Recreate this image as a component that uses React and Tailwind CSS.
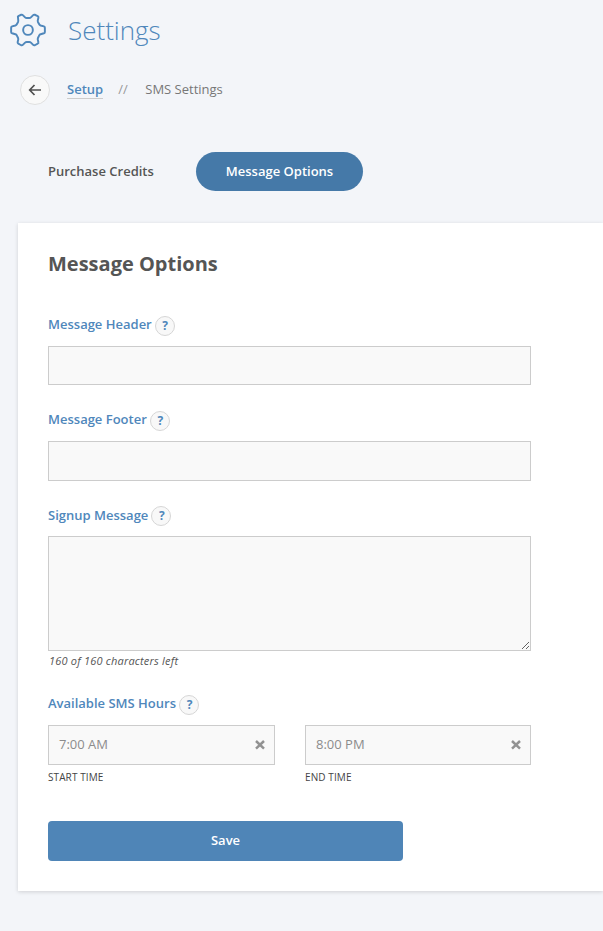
import { useState } from 'react';

function GearIcon() {
  return (
    <svg width="38" height="36" viewBox="25.5 34.5 117 111" fill="none" stroke="#4f87bb" strokeWidth="6" strokeLinejoin="round">
      <path d="M53 50 Q52 48 54 47 L63 43 Q66 42 68 44 L75 51 Q77 53 80 53 L88 53 Q91 53 93 51 L100 44 Q102 42 105 43 L114 47 Q117 49 116 52 L114 61 Q114 64 115 66 L119 73 Q120 75 123 76 L133 79 Q136 80 136 83 L136 96 Q136 99 133 100 L123 103 Q120 104 119 106 L115 114 Q114 116 114 119 L116 128 Q117 131 114 132 L105 137 Q102 138 100 136 L93 129 Q91 127 88 127 L80 127 Q77 127 75 129 L68 136 Q66 138 63 137 L54 132 Q52 131 52 128 L54 119 Q54 116 53 114 L49 106 Q48 104 45 103 L35 100 Q32 99 32 96 L32 83 Q32 80 35 79 L45 76 Q48 75 49 73 L53 66 Q54 64 54 61 Z" />
      <circle cx="84" cy="90" r="15" />
    </svg>
  );
}

function FieldLabel({ children, className = 'leading-4' }) {
  return (
    <div className="flex h-5 items-start gap-[3px] text-[13px] font-semibold text-[#4f87bb]">
      <span className={className}>{children}</span>
      <span className="flex h-5 w-5 items-center justify-center rounded-full border-[1.5px] border-[#d6d6d6] bg-[#f8f8f8] pl-px text-xs font-bold">?</span>
    </div>
  );
}

function TimeField({ value, caption, onClear, className }) {
  return (
    <div className={className}>
      <div className="flex h-10 items-center justify-between border border-[#ccc] bg-[#f9f9f9] pl-2.5 pr-2 text-[13px] text-[#8c8c8c]">
        <span>{value}</span>
        <button onClick={onClear} aria-label="Clear">
          <svg width="12" height="12" viewBox="0 0 12 12" stroke="#929292" strokeWidth="2.5">
            <path d="M2 2 L10 9.6 M10 2 L2 9.6" />
          </svg>
        </button>
      </div>
      <p className="mt-[5px] text-[10px] leading-[15px] tracking-[0.1px] text-[#444]">{caption}</p>
    </div>
  );
}

export default function App() {
  const [start, setStart] = useState('7:00 AM');
  const [end, setEnd] = useState('8:00 PM');
  const [message, setMessage] = useState('');

  return (
    <div className="h-[931px] w-full overflow-hidden bg-[#f3f5f9] font-['Open_Sans',sans-serif] text-[13px] text-[#555]">
      <header className="flex h-[60px] items-center pl-[9px]">
        <GearIcon />
        <h1 className="ml-[21px] text-[26px] font-light leading-none text-[#4f87bb]">Settings</h1>
      </header>

      <nav className="mt-[15px] flex h-[30px] items-center pl-5">
        <button aria-label="Back" className="flex h-[30px] w-[30px] items-center justify-center rounded-full border border-[#e0e0e0] bg-[#f9f9f9]">
          <svg width="14" height="12" viewBox="0 0 14 12" fill="none" stroke="#505050" strokeWidth="1.7">
            <path d="M13 6 H2 M6.5 1 L1.7 6 L6.5 11" />
          </svg>
        </button>
        <a href="#" className="ml-[17px] border-b border-[#ccc] font-semibold leading-[17px] text-[#4f87bb]">Setup</a>
        <span className="ml-[15px] text-[#999]">//</span>
        <span className="ml-[17.6px] text-[#777]">SMS Settings</span>
      </nav>

      <div className="mt-[47px] flex h-[39px] items-center pl-12">
        <a href="#" className="w-[148px] font-semibold">Purchase Credits</a>
        <a href="#" className="flex h-[39px] w-[167px] items-center justify-center rounded-full bg-[#4579a8] font-semibold text-white">Message Options</a>
      </div>

      <section className="ml-[18px] mt-8 h-[668px] bg-white pl-[30px] pt-[27px] shadow-[0_1px_4px_rgba(0,0,0,0.15)]">
        <h2 className="text-xl font-bold leading-7 text-[#555]">Message Options</h2>

        <div className="mt-[38px]">
          <FieldLabel>Message Header</FieldLabel>
          <input className="mt-[10px] block h-[39px] w-[483px] border border-[#ccc] bg-[#f9f9f9] px-2.5" />
        </div>

        <div className="mt-[26px]">
          <FieldLabel>Message Footer</FieldLabel>
          <input className="mt-[10px] block h-10 w-[483px] border border-[#ccc] bg-[#f9f9f9] px-2.5" />
        </div>

        <div className="mt-[25px]">
          <FieldLabel className="leading-[18px]">Signup Message</FieldLabel>
          <textarea
            value={message}
            maxLength={160}
            onChange={(e) => setMessage(e.target.value)}
            className="mt-[10px] block h-[115px] w-[483px] border border-[#ccc] bg-[#f9f9f9] p-2.5"
          />
          <p className="mt-[2px] pl-px text-[11px] italic leading-4 tracking-[0.2px]">{160 - message.length} of 160 characters left</p>
        </div>

        <div className="mt-[26px]">
          <FieldLabel>Available SMS Hours</FieldLabel>
          <div className="mt-[10px] flex gap-[30px]">
            <TimeField className="w-[227px]" value={start} caption="START TIME" onClear={() => setStart('')} />
            <TimeField className="w-[226px]" value={end} caption="END TIME" onClear={() => setEnd('')} />
          </div>
        </div>

        <button className="mt-9 block h-10 w-[355px] rounded-[4px] bg-[#4f85b7] font-semibold text-white">Save</button>
      </section>
    </div>
  );
}
